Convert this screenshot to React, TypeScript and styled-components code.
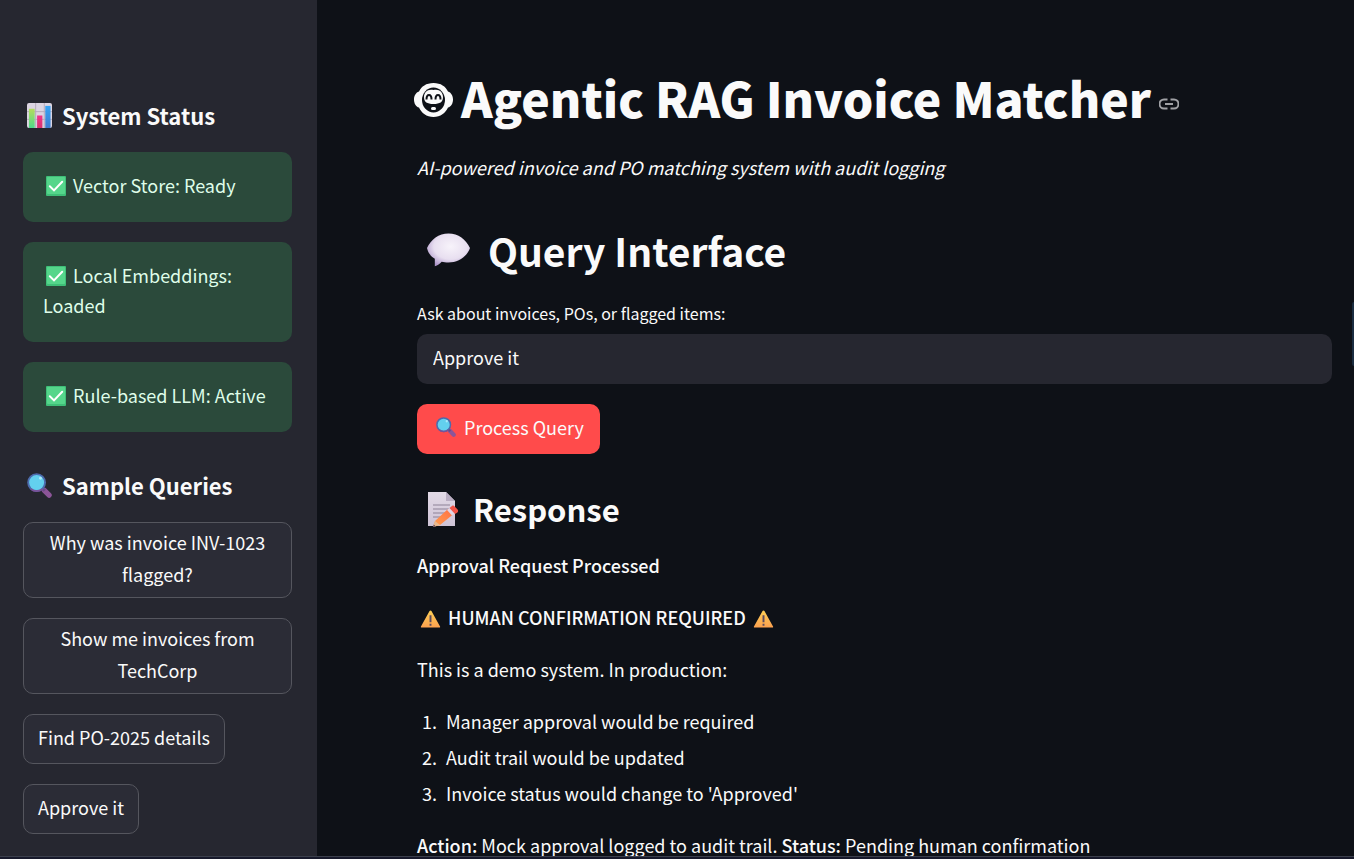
import React from "react";
import styled, { createGlobalStyle } from "styled-components";

const color = {
  page: "#0e1117",
  panel: "#262730",
  text: "#fafafa",
  success: "#2b4a3b",
  successText: "#dffde9",
  primary: "#ff4b4b",
  button: "#2b2c36",
  border: "#55565e",
};

const GlobalStyle = createGlobalStyle`
  *, *::before, *::after { box-sizing: border-box; }
  body {
    margin: 0;
    background: ${color.page};
    color: ${color.text};
    font-family: "Noto Sans CJK SC", "Noto Sans", sans-serif;
    font-size: 18px;
    line-height: 32px;
  }
  h1, h2, h3, p, ol { margin: 0; }
  button, input { font: inherit; color: inherit; }
`;

const Shell = styled.div`
  display: flex;
  flex-direction: column;
  height: 100vh;
  overflow: hidden;
`;

const Columns = styled.div`
  display: flex;
  flex: 1;
  min-height: 0;
`;

const WindowEdge = styled.div`
  flex: none;
  height: 3px;
  border-top: 1px solid #3c404c;
  background: #17192b;
`;

const Sidebar = styled.aside`
  flex: none;
  width: 317px;
  padding: 100px 25px 0 23px;
  background: ${color.panel};
  overflow: hidden;
`;

const SideSection = styled.section`
  display: flex;
  flex-direction: column;
  align-items: flex-start;
  gap: 20px;
  margin-bottom: 38px;
`;

const SideHeading = styled.h2`
  display: flex;
  align-items: center;
  gap: 10px;
  height: 32px;
  padding: 0 0 2px 4px;
  font-size: 22px;
  font-weight: 700;
`;

const Status = styled.p`
  width: 100%;
  padding: 18px 20px 22px;
  border-radius: 10px;
  background: ${color.success};
  color: ${color.successText};
  line-height: 30px;
`;

const SampleButton = styled.button`
  min-height: 50px;
  padding: 3px 14px 7px;
  border: 1px solid ${color.border};
  border-radius: 10px;
  background: ${color.button};
  cursor: pointer;
`;

const Main = styled.main`
  position: relative;
  flex: 1;
  min-width: 0;
  padding: 64px 22px 0 100px;
  overflow: hidden;
`;

const ScrollThumb = styled.div`
  position: absolute;
  top: 302px;
  right: 0;
  width: 2px;
  height: 64px;
  border-radius: 2px 0 0 2px;
  background: #1a2c40;
`;

const Title = styled.h1`
  display: flex;
  align-items: center;
  height: 66px;
  margin-left: -3px;
  font-size: 48px;
  font-weight: 900;
  line-height: 66px;
  white-space: nowrap;
`;

const TitleMark = styled.span`
  display: flex;
  padding-top: 6px;
`;

const TitleText = styled.span`
  margin: 0 8px;
`;

const AnchorLink = styled.a`
  display: flex;
  padding-top: 14px;
  color: #a0a1a5;
`;

const Caption = styled.p`
  margin-top: 21px;
  font-style: italic;
`;

const QueryHeading = styled.h2`
  display: flex;
  align-items: center;
  gap: 18px;
  height: 54px;
  margin-top: 40px;
  padding-left: 10px;
  font-size: 39px;
  font-weight: 700;
`;

const Form = styled.form`
  display: flex;
  flex-direction: column;
  align-items: flex-start;
  margin-top: 22px;
`;

const Label = styled.label`
  margin-bottom: 7px;
  font-size: 16px;
  line-height: 28px;
`;

const QueryInput = styled.input`
  width: 100%;
  height: 50px;
  padding: 0 16px 4px;
  border: 0;
  border-radius: 10px;
  outline: 0;
  background: ${color.panel};
`;

const ProcessButton = styled.button`
  display: flex;
  align-items: center;
  gap: 8px;
  height: 50px;
  margin-top: 20px;
  padding: 0 16px 4px 19px;
  border: 0;
  border-radius: 10px;
  background: ${color.primary};
  cursor: pointer;
`;

const ResponseHeading = styled.h3`
  display: flex;
  align-items: center;
  gap: 14px;
  height: 42px;
  margin-top: 34px;
  padding-left: 10px;
  font-size: 31px;
  font-weight: 700;
`;

const Answer = styled.div`
  display: flex;
  flex-direction: column;
  gap: 20px;
  margin-top: 19px;

  strong { font-weight: 500; }
`;

const Steps = styled.ol`
  display: flex;
  flex-direction: column;
  gap: 4px;
  padding-left: 24px;

  li { padding-left: 5px; }
`;

const Glyph = styled.svg<{ $inline?: boolean }>`
  display: ${(p) => (p.$inline ? "inline-block" : "block")};
  flex: none;
  margin: ${(p) => (p.$inline ? "0 3px" : "0")};
  vertical-align: ${(p) => (p.$inline ? "-3px" : "baseline")};
`;

const ChartIcon = () => (
  <Glyph width="25" height="25" viewBox="0 0 26 26" aria-hidden="true">
    <defs>
      <linearGradient id="barGreen" x2="0" y2="1"><stop stopColor="#b4dd5c" /><stop offset="1" stopColor="#4fd98a" /></linearGradient>
      <linearGradient id="barBlue" x2="0" y2="1"><stop stopColor="#36a5f5" /><stop offset="1" stopColor="#3f7bd0" /></linearGradient>
      <linearGradient id="barRed" x2="0" y2="1"><stop stopColor="#f2338a" /><stop offset="1" stopColor="#d6336e" /></linearGradient>
    </defs>
    <rect width="26" height="26" rx="2" fill="#dcd5e2" />
    <path d="M0 9H26M0 17H26M9 0V26M18 0V26" stroke="#b5abbb" strokeWidth="1" />
    <path d="M2 6h6v20H2z" fill="url(#barGreen)" />
    <path d="M10.500 13h5.500v13h-5.500z" fill="url(#barRed)" />
    <path d="M19 3h5.500v23H19z" fill="url(#barBlue)" />
  </Glyph>
);

const CheckIcon = () => (
  <Glyph $inline width="20" height="20" viewBox="0 0 20 20" aria-hidden="true">
    <rect width="20" height="20" rx="1" fill="#3fbf78" />
    <rect x="1" y="1" width="18" height="17" rx="1" fill="#55d68b" />
    <path d="M3.800 10.300 8 14.400 16.200 5.800" fill="none" stroke="#fff" strokeWidth="2" strokeLinecap="round" />
  </Glyph>
);

const SearchIcon = ({ size }: { size: number }) => (
  <Glyph width={size} height={size} viewBox="0 0 26 26" aria-hidden="true">
    <path d="m18 18 5 5" stroke="#8c5598" strokeWidth="5.500" strokeLinecap="round" />
    <path d="m15.500 15.500 3 3" stroke="#6b4a86" strokeWidth="3" />
    <circle cx="10" cy="10" r="8.800" fill="#63d0ee" stroke="#4d6bad" strokeWidth="2" />
    <path d="M4 16.500a8.800 8.800 0 0 0 12 0" fill="none" stroke="#7a5299" strokeWidth="2" />
    <circle cx="14" cy="5.500" r="1.500" fill="#a9e9fa" />
  </Glyph>
);

const MonkeyIcon = () => (
  <Glyph width="39" height="36" viewBox="0 0 39 36" aria-hidden="true">
    <path
      d="M19.500 1C12 1 7.500 4.500 5 9.500 2 10.500 0 13.500 0 17.500s2 7.500 5 8C7.500 31 12.500 35 19.500 35s12-4 14.500-9.500c3-.5 5-4 5-8s-2-7-5-8C31.500 4.500 27 1 19.500 1Z"
      fill="#fafafa"
    />
    <ellipse cx="19.500" cy="18" rx="11.500" ry="12.500" fill="#0e1117" />
    <path
      d="M19.500 8c-5.500-1.500-9.500 2-9.500 7 0 5 3 7 9.500 7s9.500-2 9.500-7C29 10 25 6.500 19.500 8Z"
      fill="#fafafa"
    />
    <path d="M12.500 17.500c0-6 5-6 5 0M21.500 17.500c0-6 5-6 5 0" fill="none" stroke="#0e1117" strokeWidth="2" />
    <rect x="17" y="25" width="5" height="3" rx="1.500" fill="#fafafa" />
  </Glyph>
);

const LinkIcon = () => (
  <Glyph width="20" height="20" viewBox="0 0 20 20" fill="none" stroke="currentColor" strokeWidth="2" aria-hidden="true">
    <path d="M8.500 5.500H5a4.300 4.300 0 0 0 0 9h3.500M11.500 5.500H15a4.300 4.300 0 0 1 0 9h-3.500M6 10h8" />
  </Glyph>
);

const SpeechIcon = () => (
  <Glyph width="43" height="34" viewBox="0 0 44 34" aria-hidden="true">
    <defs>
      <radialGradient id="speech" cx=".55" cy=".4" r=".65"><stop stopColor="#f7f3fa" /><stop offset=".6" stopColor="#e8dff0" /><stop offset="1" stopColor="#ac94c8" /></radialGradient>
    </defs>
    <path d="M22 0C12 0 4 6 0 15c1 5 4 8.500 8 11v7.500c3-.5 5-2.500 7-4.500 2 .6 4 .8 7 .8 10 0 19-6 22-14.800C40 6 32 0 22 0Z" fill="url(#speech)" />
  </Glyph>
);

const MemoIcon = () => (
  <Glyph width="32" height="36" viewBox="0 0 32 36" aria-hidden="true">
    <defs>
      <linearGradient id="paper" x2="0" y2="1"><stop stopColor="#e2dae6" /><stop offset="1" stopColor="#cec3d6" /></linearGradient>
      <linearGradient id="pencil" x1="1" y1="0" x2="0" y2="1"><stop stopColor="#ff7045" /><stop offset="1" stopColor="#ffa04d" /></linearGradient>
    </defs>
    <path d="M1 1h18l9 9v25H1z" fill="url(#paper)" />
    <path d="m19 1 9 9h-9z" fill="#b9adc2" />
    <path d="M6 14h17M6 18h17M6 22h13M6 26h8" stroke="#8d8297" strokeWidth="1" />
    <path d="M8 30 21 18l5 5.500L13 34l-7 2z" fill="url(#pencil)" />
    <path d="m20 19 3-2.500 5 5.500-3 2.500z" fill="#e0d6e4" />
    <path d="m22.500 17 2.500-2c1-.8 2-.3 2.600.4l3 3.200c.8 1 .6 2-.2 2.800L28 23z" fill="#f25548" />
    <path d="M8 30 6 36l7-2z" fill="#e9b98f" />
    <path d="m6.800 33.500-.8 2.500 2.500-.8z" fill="#4d3a57" />
  </Glyph>
);

const WarningIcon = () => (
  <Glyph $inline width="21" height="18" viewBox="0 0 22 18" role="img" aria-label="Warning">
    <defs>
      <linearGradient id="warn" x2="0" y2="1"><stop stopColor="#fdcf55" /><stop offset="1" stopColor="#fba04f" /></linearGradient>
    </defs>
    <path d="M10 .6c.4-.8 1.600-.8 2 0l9 16.200c.3.600 0 1.200-.6 1.200H1.600c-.6 0-.9-.6-.6-1.200z" fill="url(#warn)" />
    <path d="M11 5v7.500M11 14v2" stroke="#5b4a5e" strokeWidth="2" />
  </Glyph>
);

const statuses = ["Vector Store: Ready", "Local Embeddings: Loaded", "Rule-based LLM: Active"];

const samples = [
  "Why was invoice INV-1023 flagged?",
  "Show me invoices from TechCorp",
  "Find PO-2025 details",
  "Approve it",
];

const steps = [
  "Manager approval would be required",
  "Audit trail would be updated",
  "Invoice status would change to 'Approved'",
];

export default function App() {
  const [query, setQuery] = React.useState("Approve it");

  return (
    <Shell>
      <GlobalStyle />
      <Columns>
        <Sidebar>
          <SideSection>
            <SideHeading><ChartIcon />System Status</SideHeading>
            {statuses.map((status) => (
              <Status key={status}><CheckIcon /> {status}</Status>
            ))}
          </SideSection>
          <SideSection>
            <SideHeading><SearchIcon size={25} />Sample Queries</SideHeading>
            {samples.map((sample) => (
              <SampleButton key={sample} type="button" onClick={() => setQuery(sample)}>
                {sample}
              </SampleButton>
            ))}
          </SideSection>
        </Sidebar>
        <Main>
          <Title id="matcher">
            <TitleMark><MonkeyIcon /></TitleMark>
            <TitleText>Agentic RAG Invoice Matcher</TitleText>
            <AnchorLink href="#matcher" aria-label="Link to heading"><LinkIcon /></AnchorLink>
          </Title>
          <Caption>AI-powered invoice and PO matching system with audit logging</Caption>
          <QueryHeading><SpeechIcon />Query Interface</QueryHeading>
          <Form onSubmit={(event) => event.preventDefault()}>
            <Label htmlFor="query">Ask about invoices, POs, or flagged items:</Label>
            <QueryInput id="query" type="text" value={query} onChange={(event) => setQuery(event.target.value)} />
            <ProcessButton type="submit"><SearchIcon size={20} />Process Query</ProcessButton>
          </Form>
          <ResponseHeading><MemoIcon />Response</ResponseHeading>
          <Answer>
            <p><strong>Approval Request Processed</strong></p>
            <p><WarningIcon /> <strong>HUMAN CONFIRMATION REQUIRED</strong> <WarningIcon /></p>
            <p>This is a demo system. In production:</p>
            <Steps>
              {steps.map((step) => <li key={step}>{step}</li>)}
            </Steps>
            <p>
              <strong>Action:</strong> Mock approval logged to audit trail. <strong>Status:</strong> Pending human confirmation
            </p>
          </Answer>
          <ScrollThumb />
        </Main>
      </Columns>
      <WindowEdge />
    </Shell>
  );
}
